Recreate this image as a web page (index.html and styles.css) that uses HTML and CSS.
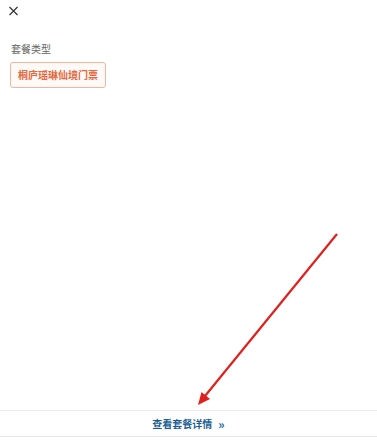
FILE: index.html
```html
<!DOCTYPE html>
<html lang="en">
<head>
<meta charset="utf-8">
<link rel="stylesheet" href="styles.css">
</head>
<body>
<div class="page">
  <div class="header">
    <svg class="close" width="11" height="10" viewBox="0 0 11 10"><path d="M1.5 1 L9.5 9 M9.5 1 L1.5 9" stroke="#333" stroke-width="1.2" fill="none"/></svg>
  </div>
  <div class="section">
    <div class="label">套餐类型</div>
    <div class="tags"><span class="tag">桐庐瑶琳仙境门票</span></div>
  </div>
  <div class="spacer"></div>
  <div class="footer"><span class="more">查看套餐详情</span><span class="chev">»</span></div>
  <svg class="arrow" width="377" height="441" viewBox="0 0 377 441">
    <line x1="337" y1="234" x2="205" y2="396" stroke="#e0201c" stroke-width="2.2"/>
    <polygon points="198,405 210,399 201.5,392" fill="#e0201c"/>
  </svg>
</div>
</body>
</html>
```
FILE: styles.css
```css
html, body { margin: 0; padding: 0; background: #fff; }
body { font-family: "Noto Sans CJK SC", "Noto Sans", sans-serif; }
.page { position: relative; width: 377px; height: 441px; display: flex; flex-direction: column; overflow: hidden; }
.header { padding: 6px 0 0 8px; height: 20px; }
.close { display: block; }
.section { padding: 17px 10px 0 11px; }
.label { font-size: 10px; line-height: 12px; color: #666; }
.tags { margin-top: 7px; display: flex; }
.tag { display: inline-block; height: 24px; line-height: 24px; padding: 0 7px; font-size: 10px; font-weight: bold; color: #e8673d; border: 1px solid #f3b59a; border-radius: 3px; background: #fffaf7; margin-left: -1px; }
.spacer { flex: 1; }
.footer { height: 25px; border-top: 1px solid #ececec; border-bottom: 1px solid #e6e6e6; margin-bottom: 4px; display: flex; align-items: center; justify-content: center; }
.more { font-size: 10px; font-weight: bold; color: #1d5f93; }
.chev { font-size: 12px; font-weight: bold; color: #1d5f93; margin-left: 6px; line-height: 1; }
.arrow { position: absolute; left: 0; top: 0; pointer-events: none; }
```
